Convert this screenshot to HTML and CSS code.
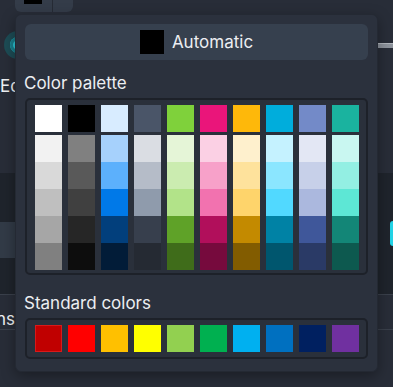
FILE: index.html
```html
<!DOCTYPE html>
<html lang="en">
<head>
<meta charset="utf-8">
<title>Color picker</title>
<link rel="stylesheet" href="styles.css">
</head>
<body>
<div class="page">
  <div class="bg">
    <div class="bg-top">
      <div class="trigger"><span class="trig-swatch"></span><span class="trig-arrow"></span></div>
    </div>
    <div class="bg-toggle-row">
      <span class="toggle"><span class="toggle-dot"></span></span>
      <span class="track"></span>
    </div>
    <div class="bg-label"><span>Edges</span></div>
    <div class="bg-list">
      <div class="bg-item"></div>
      <div class="bg-item sel"><span class="sel-left"></span><span class="sel-right"><span class="cyan"></span></span></div>
      <div class="bg-item last"></div>
      <div class="bg-opt"><div class="opt-clip"><span>Options</span></div></div>
    </div>
  </div>

  <div class="popup">
    <button class="auto-btn"><span class="auto-swatch"></span><span>Automatic</span></button>
    <div class="section-label">Color palette</div>
    <div class="palette-box">
      <div class="palette">
        <div class="pcol">
          <span class="sw top" style="background:#ffffff"></span>
          <span class="sw" style="background:#f2f2f2"></span>
          <span class="sw" style="background:#d9d9d9"></span>
          <span class="sw" style="background:#bfbfbf"></span>
          <span class="sw" style="background:#a6a6a6"></span>
          <span class="sw" style="background:#808080"></span>
        </div>
        <div class="pcol">
          <span class="sw top" style="background:#000000"></span>
          <span class="sw" style="background:#808080"></span>
          <span class="sw" style="background:#595959"></span>
          <span class="sw" style="background:#404040"></span>
          <span class="sw" style="background:#262626"></span>
          <span class="sw" style="background:#0d0d0d"></span>
        </div>
        <div class="pcol">
          <span class="sw top" style="background:#d8ecff"></span>
          <span class="sw" style="background:#a6d1fc"></span>
          <span class="sw" style="background:#5cb0fc"></span>
          <span class="sw" style="background:#0079e8"></span>
          <span class="sw" style="background:#023f7c"></span>
          <span class="sw" style="background:#021c38"></span>
        </div>
        <div class="pcol">
          <span class="sw top" style="background:#4a5568"></span>
          <span class="sw" style="background:#dadde3"></span>
          <span class="sw" style="background:#b5bcc8"></span>
          <span class="sw" style="background:#8f9bac"></span>
          <span class="sw" style="background:#373f4d"></span>
          <span class="sw" style="background:#252a33"></span>
        </div>
        <div class="pcol">
          <span class="sw top" style="background:#7fd13b"></span>
          <span class="sw" style="background:#e5f5d7"></span>
          <span class="sw" style="background:#cbecb0"></span>
          <span class="sw" style="background:#b2e389"></span>
          <span class="sw" style="background:#5fa228"></span>
          <span class="sw" style="background:#3f6c1a"></span>
        </div>
        <div class="pcol">
          <span class="sw top" style="background:#ea157a"></span>
          <span class="sw" style="background:#fbd0e4"></span>
          <span class="sw" style="background:#f7a1c9"></span>
          <span class="sw" style="background:#f272af"></span>
          <span class="sw" style="background:#b10f5b"></span>
          <span class="sw" style="background:#760a3d"></span>
        </div>
        <div class="pcol">
          <span class="sw top" style="background:#feb80a"></span>
          <span class="sw" style="background:#fef0cd"></span>
          <span class="sw" style="background:#fee29c"></span>
          <span class="sw" style="background:#fed46b"></span>
          <span class="sw" style="background:#c38a00"></span>
          <span class="sw" style="background:#825c00"></span>
        </div>
        <div class="pcol">
          <span class="sw top" style="background:#00addc"></span>
          <span class="sw" style="background:#c5f2ff"></span>
          <span class="sw" style="background:#8be6ff"></span>
          <span class="sw" style="background:#51d9ff"></span>
          <span class="sw" style="background:#0082a5"></span>
          <span class="sw" style="background:#00566e"></span>
        </div>
        <div class="pcol">
          <span class="sw top" style="background:#738ac8"></span>
          <span class="sw" style="background:#e3e7f4"></span>
          <span class="sw" style="background:#c7d0e9"></span>
          <span class="sw" style="background:#abb8de"></span>
          <span class="sw" style="background:#3f579a"></span>
          <span class="sw" style="background:#2a3a66"></span>
        </div>
        <div class="pcol">
          <span class="sw top" style="background:#1ab39f"></span>
          <span class="sw" style="background:#c9f7f1"></span>
          <span class="sw" style="background:#93efe3"></span>
          <span class="sw" style="background:#5de7d5"></span>
          <span class="sw" style="background:#138677"></span>
          <span class="sw" style="background:#0d594f"></span>
        </div>
      </div>
    </div>
    <div class="section-label std">Standard colors</div>
    <div class="palette-box std-box">
      <div class="palette">
        <span class="sw active" style="background:#c00000"></span>
        <span class="sw" style="background:#ff0000"></span>
        <span class="sw" style="background:#ffc000"></span>
        <span class="sw" style="background:#ffff00"></span>
        <span class="sw" style="background:#92d050"></span>
        <span class="sw" style="background:#00b050"></span>
        <span class="sw" style="background:#00b0f0"></span>
        <span class="sw" style="background:#0070c0"></span>
        <span class="sw" style="background:#002060"></span>
        <span class="sw" style="background:#7030a0"></span>
      </div>
    </div>
  </div>
</div>
</body>
</html>
```
FILE: styles.css
```css
* { box-sizing: border-box; }
html, body {
  margin: 0;
  padding: 0;
  background: #282d38;
  font-family: Inter, "Noto Sans", sans-serif;
  color: #e8eaee;
}
.page {
  position: relative;
  width: 393px;
  height: 387px;
  overflow: hidden;
}

/* background page (behind the popup) */
.bg {
  display: flex;
  flex-direction: column;
}
.bg-top {
  height: 12px;
  padding-left: 15px;
  display: flex;
  align-items: flex-end;
}
.trigger {
  flex: none;
  width: 58px;
  height: 32px;
  border-radius: 6px;
  background: #343c49;
  display: flex;
  align-items: flex-start;
  padding-left: 9px;
}
.trig-swatch {
  width: 18px;
  height: 24px;
  background: #000;
}
.trig-arrow {
  margin-left: 10px;
  width: 1px;
  height: 32px;
  background: #262b35;
}
.bg-toggle-row {
  margin-top: 19px;
  height: 28px;
  display: flex;
  align-items: center;
  justify-content: space-between;
}
.toggle {
  margin-left: 4px;
  width: 28px;
  height: 28px;
  border-radius: 50%;
  background: #1d4c55;
  display: flex;
  align-items: center;
  justify-content: center;
}
.toggle-dot {
  width: 16px;
  height: 16px;
  border-radius: 50%;
  background: #2cc6d6;
  box-shadow: inset 0 0 0 3px #1a7f8c;
}
.track {
  width: 40px;
  height: 5px;
  background: #8d939c;
  border-top: 1px solid #b1b6bd;
}
.bg-label {
  margin-top: 15px;
  height: 24px;
  width: 15px;
  overflow: hidden;
  white-space: nowrap;
  font-size: 17px;
  line-height: 24px;
  color: #f0f2f5;
}
.bg-list {
  margin-top: 75px;
  display: flex;
  flex-direction: column;
}
.bg-item {
  height: 49px;
  background: #1f242c;
}
.bg-item.sel {
  height: 36px;
  display: flex;
}
.sel-left {
  width: 200px;
  background: #323b47;
}
.sel-right {
  flex: 1;
  background: #1f242c;
  display: flex;
  justify-content: flex-end;
}
.cyan {
  width: 3px;
  height: 25px;
  margin-top: -1px;
  background: #22d3e6;
  border-radius: 3px 0 0 3px;
}
.bg-item.last {
  height: 37px;
  border-bottom: 1px solid #3a404b;
}
.bg-opt {
  height: 35px;
  border-bottom: 1px solid #3a404b;
  display: flex;
  align-items: flex-end;
}
.opt-clip {
  width: 15px;
  overflow: hidden;
  display: flex;
  justify-content: flex-end;
  font-size: 17px;
  line-height: 20px;
  white-space: nowrap;
  color: #f0f2f5;
}

/* popup */
.popup {
  position: absolute;
  left: 15px;
  top: 14px;
  width: 363px;
  height: 358px;
  background: #2b313d;
  border: 1px solid #242933;
  border-radius: 6px;
  box-shadow: 0 4px 14px rgba(0, 0, 0, 0.35);
  padding: 9px 9px 12px 9px;
  display: flex;
  flex-direction: column;
}
.auto-btn {
  height: 36px;
  width: 100%;
  border: none;
  border-radius: 6px;
  background: #36404e;
  color: #eceef2;
  font-family: Inter, "Noto Sans", sans-serif;
  font-size: 17px;
  display: flex;
  align-items: center;
  justify-content: center;
  gap: 8px;
  padding: 0;
}
.auto-swatch {
  width: 24px;
  height: 24px;
  background: #000;
}
.section-label {
  margin-top: 13px;
  margin-left: -1px;
  font-size: 17px;
  line-height: 20px;
  height: 20px;
  color: #eceef2;
}
.section-label.std {
  margin-top: 18px;
}
.palette-box {
  margin-top: 5px;
  border: 2px solid #1d2129;
  border-radius: 5px;
  padding: 5px 8px 3px 8px;
  background: #2a303b;
}
.std-box {
  padding: 5px 8px 5px 8px;
}
.palette {
  display: grid;
  grid-template-columns: repeat(10, 27px);
  column-gap: 6px;
}
.pcol {
  display: flex;
  flex-direction: column;
}
.sw {
  display: block;
  width: 27px;
  height: 27px;
}
.sw.top {
  margin-bottom: 3px;
}
.sw.active {
  box-shadow: inset 0 0 0 1px #d81a1a;
}
```
